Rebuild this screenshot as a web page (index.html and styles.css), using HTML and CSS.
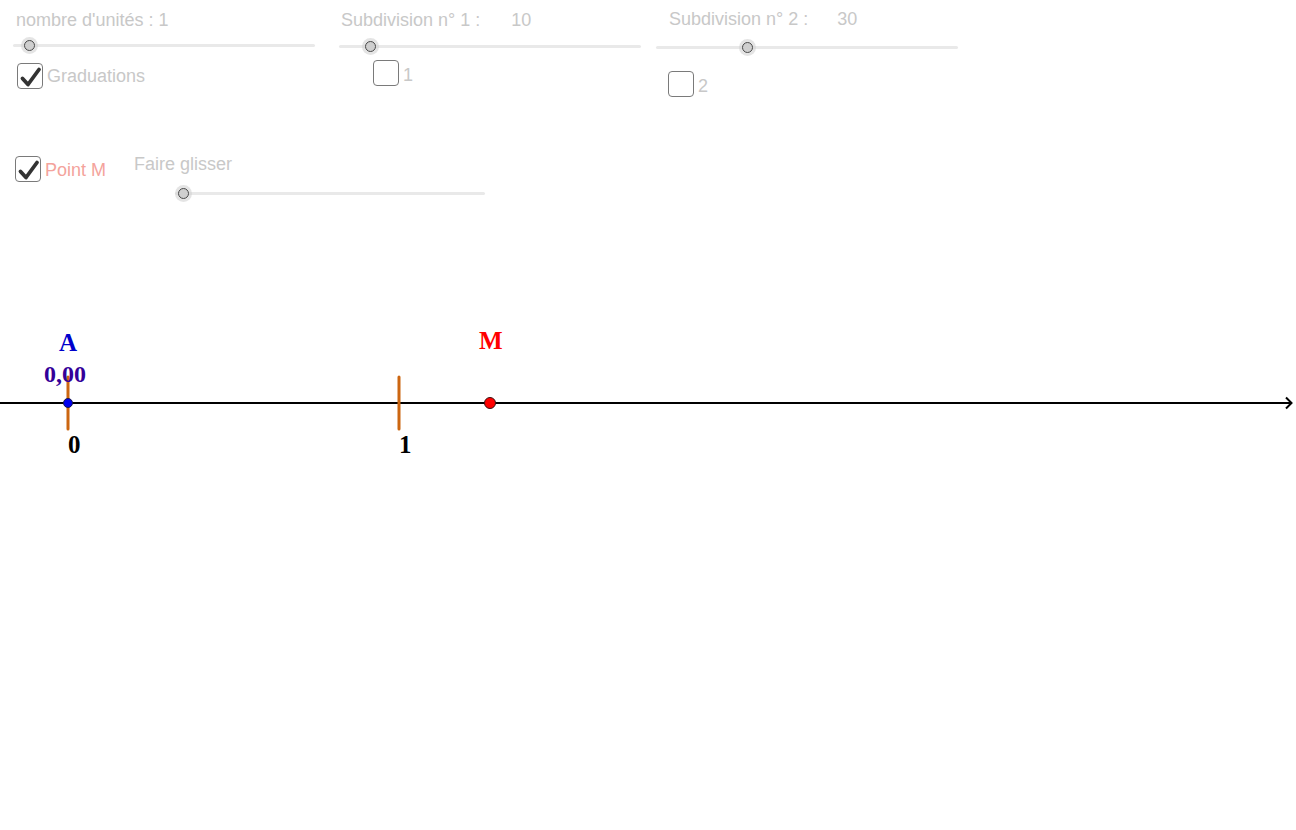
FILE: index.html
```html
<!DOCTYPE html>
<html lang="fr">
<head>
<meta charset="utf-8">
<title>Droite graduée</title>
<link rel="stylesheet" href="styles.css">
</head>
<body>
<div class="applet">
  <div class="lbl lbl-units">nombre d'unités : 1</div>
  <div class="slider slider-units"><span class="knob" style="left:16px"></span></div>
  <div class="check check-grad"><span class="box on"><svg viewBox="0 0 24 24"><path d="M4.5 14.5 L10 20.5 L21 5.5" /></svg></span><span class="ctext">Graduations</span></div>

  <div class="lbl lbl-sub1">Subdivision n° 1 :<span class="val">10</span></div>
  <div class="slider slider-sub1"><span class="knob" style="left:31px"></span></div>
  <div class="check check-1"><span class="box"></span><span class="ctext">1</span></div>

  <div class="lbl lbl-sub2">Subdivision n° 2 :<span class="val val2">30</span></div>
  <div class="slider slider-sub2"><span class="knob" style="left:91px"></span></div>
  <div class="check check-2"><span class="box"></span><span class="ctext">2</span></div>

  <div class="check check-m"><span class="box on"><svg viewBox="0 0 24 24"><path d="M4.5 14.5 L10 20.5 L21 5.5" /></svg></span><span class="ctext pink">Point M</span></div>
  <div class="lbl lbl-glisser">Faire glisser</div>
  <div class="slider slider-glisser"><span class="knob" style="left:8px"></span></div>

  <svg class="axis" viewBox="0 0 1296 830" width="1296" height="830">
    <line x1="0" y1="403" x2="1291" y2="403" class="axisline"/>
    <path d="M1286 397.5 L1291.5 403 L1286 408.5" class="arrow"/>
    <line x1="68" y1="377" x2="68" y2="429" class="tick"/>
    <line x1="399" y1="377" x2="399" y2="429" class="tick"/>
    <circle cx="68" cy="403" r="4.5" class="pt-a"/>
    <circle cx="490" cy="403" r="5.5" class="pt-m"/>
    <text x="59" y="351" class="lab lab-a">A</text>
    <text x="44" y="381.5" class="lab lab-val">0,00</text>
    <text x="479" y="349" class="lab lab-m">M</text>
    <text x="68" y="453" class="lab lab-num">0</text>
    <text x="399" y="453" class="lab lab-num">1</text>
  </svg>
</div>
</body>
</html>
```
FILE: styles.css
```css
html, body {
  margin: 0;
  padding: 0;
  background: #ffffff;
}
.applet {
  position: relative;
  width: 1296px;
  height: 830px;
  overflow: hidden;
  font-family: "Liberation Sans", Arial, sans-serif;
  font-size: 18px;
  line-height: 18px;
  color: #c8c8c8;
}
.lbl {
  position: absolute;
  white-space: nowrap;
}
.lbl .val {
  margin-left: 31px;
}
.lbl .val2 {
  margin-left: 29px;
}
.lbl-units { left: 16px; top: 11px; }
.lbl-sub1 { left: 341px; top: 11px; }
.lbl-sub2 { left: 669px; top: 10px; }
.lbl-glisser { left: 134px; top: 155px; }

.slider {
  position: absolute;
  height: 3px;
  background: #e9e9e9;
  border-radius: 2px;
}
.slider-units { left: 13px; top: 44px; width: 302px; }
.slider-sub1 { left: 339px; top: 45px; width: 302px; }
.slider-sub2 { left: 656px; top: 46px; width: 302px; }
.slider-glisser { left: 175px; top: 192px; width: 310px; }
.knob {
  position: absolute;
  top: 1.5px;
  width: 11px;
  height: 11px;
  margin-left: -5.5px;
  margin-top: -5.5px;
  box-sizing: border-box;
  border-radius: 50%;
  background: #cfcfcf;
  border: 1px solid #4a4a4a;
  box-shadow: 0 0 0 3px rgba(210, 210, 210, 0.6);
}

.check {
  position: absolute;
  display: flex;
  align-items: center;
  gap: 4px;
}
.check-grad { left: 17px; top: 63px; }
.check-1 { left: 373px; top: 60px; }
.check-2 { left: 668px; top: 71px; }
.check-m { left: 15px; top: 156px; }
.box {
  display: block;
  width: 26px;
  height: 26px;
  box-sizing: border-box;
  border: 1px solid #7a7a7a;
  border-radius: 4px;
  background: #ffffff;
}
.box svg {
  display: block;
  width: 24px;
  height: 24px;
}
.box svg path {
  fill: none;
  stroke: #333333;
  stroke-width: 3.8;
  stroke-linecap: round;
  stroke-linejoin: round;
}
.ctext {
  white-space: nowrap;
  position: relative;
  top: 0;
}
.check-1 .ctext, .check-2 .ctext { top: 2px; }
.check-m .ctext { top: 1px; }
.pink { color: #f4a39c; }

.axis {
  position: absolute;
  left: 0;
  top: 0;
  pointer-events: none;
}
.axisline {
  stroke: #000000;
  stroke-width: 2;
}
.arrow {
  fill: none;
  stroke: #000000;
  stroke-width: 2;
}
.tick {
  stroke: #cc6611;
  stroke-width: 3;
  stroke-linecap: round;
}
.pt-a {
  fill: #0000ee;
  stroke: #1a1a4a;
  stroke-width: 1;
}
.pt-m {
  fill: #ff0000;
  stroke: #3a1010;
  stroke-width: 1;
}
.lab {
  font-family: "Liberation Serif", "Times New Roman", serif;
  font-weight: bold;
}
.lab-a { font-size: 25px; fill: #0000cc; }
.lab-m { font-size: 25px; fill: #ff0000; }
.lab-val { font-size: 24px; fill: #330099; }
.lab-num { font-size: 25px; fill: #000000; }
```
